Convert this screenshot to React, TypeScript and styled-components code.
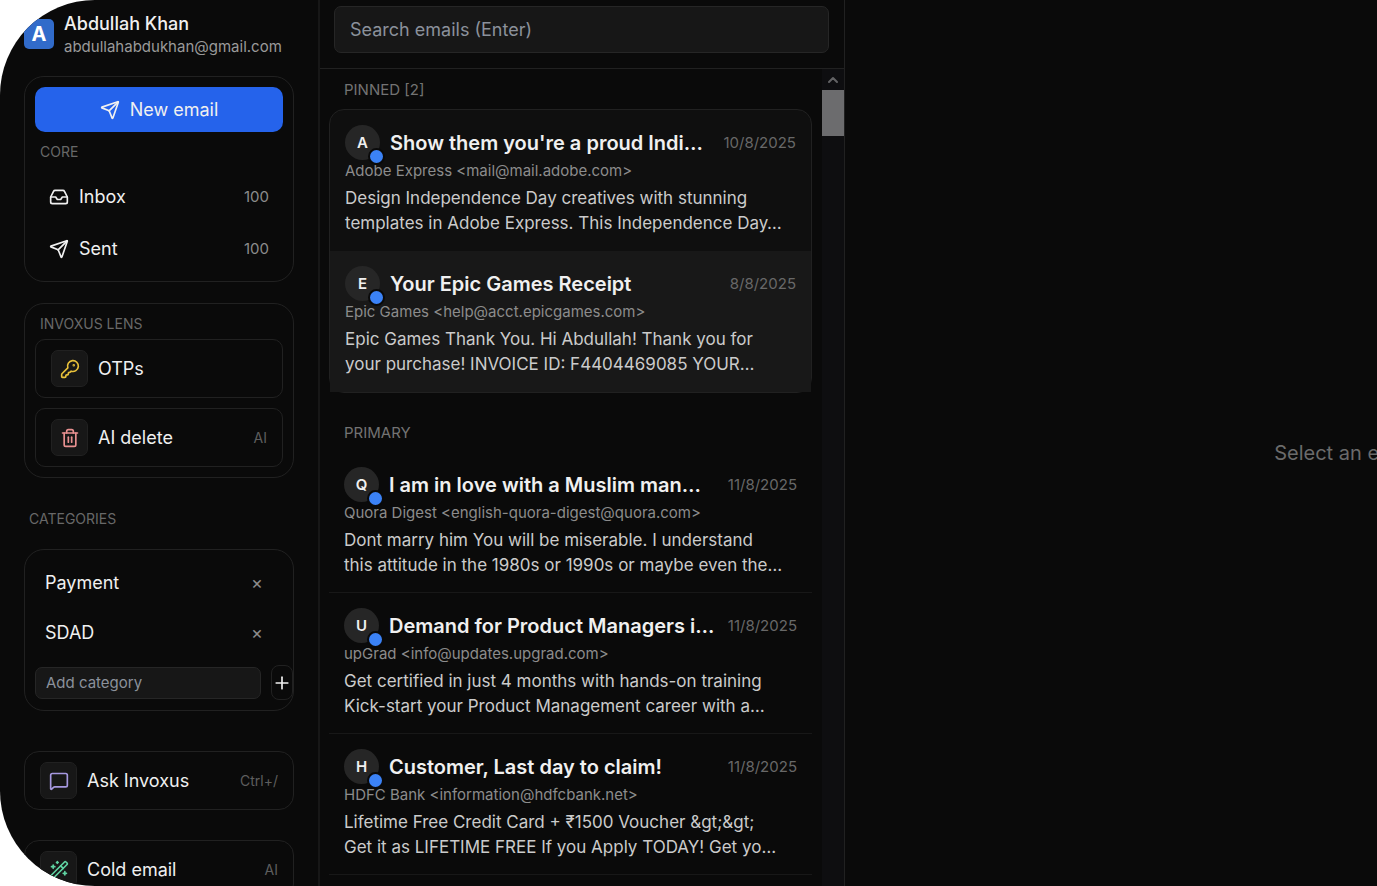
import React from "react";
import styled, { createGlobalStyle, css } from "styled-components";
import {
  ChevronUp,
  Inbox,
  KeyRound,
  MessageSquare,
  Plus,
  Send,
  Trash2,
  WandSparkles,
} from "lucide-react";

const c = {
  bg: "#0a0a0a",
  line: "#212121",
  panel: "#171717",
  raised: "#0f0f0f",
  avatar: "#262626",
  text: "#f0f0f0",
  body: "#cbcbcb",
  muted: "#8c8c8c",
  faint: "#686868",
};

const GlobalStyle = createGlobalStyle`
  * { box-sizing: border-box; }
  body {
    margin: 0;
    background: #ffffff;
    color: ${c.text};
    font-family: Inter, "Liberation Sans", sans-serif;
    font-size: 18px;
    line-height: 25px;
  }
  button, input { font: inherit; color: inherit; margin: 0; }
  button { cursor: pointer; }
  h1, h2, h3, p, ul { margin: 0; padding: 0; font: inherit; }
  ul { list-style: none; }
`;

const Shell = styled.div`
  display: flex;
  height: 100vh;
  overflow: hidden;
  background: ${c.bg};
  border-radius: 95px 0 0 95px;
`;

const Sidebar = styled.aside`
  flex: 0 0 320px;
  display: flex;
  flex-direction: column;
  padding: 11px 24px 0;
  border-right: 2px solid #171717;
  overflow: hidden;
`;

const Profile = styled.div`
  display: flex;
  align-items: center;
  gap: 10px;
  height: 46px;
  flex: none;
  margin-bottom: 19px;
`;

const Logo = styled.div`
  flex: 0 0 30px;
  height: 30px;
  border-radius: 5px;
  background: #316bca;
  color: #ffffff;
  font-size: 20px;
  font-weight: 700;
  line-height: 30px;
  text-align: center;
`;

const ProfileName = styled.p`
  font-weight: 500;
  line-height: 25px;
`;

const ProfileMail = styled.p`
  color: #9a9a9a;
  font-size: 15px;
  line-height: 21px;
`;

const Card = styled.section<{ $gap: number }>`
  flex: none;
  padding: 10px;
  border: 1px solid ${c.line};
  border-radius: 20px;
  margin-bottom: ${(p) => p.$gap}px;
`;

const Label = styled.h2<{ $gap: number }>`
  flex: none;
  color: ${c.faint};
  font-size: 14px;
  line-height: 20px;
  margin-bottom: ${(p) => p.$gap}px;
  padding: 0 5px;
  text-transform: uppercase;
`;

const PrimaryButton = styled.button`
  display: flex;
  align-items: center;
  justify-content: center;
  gap: 10px;
  width: 100%;
  height: 45px;
  margin-bottom: 10px;
  border: 0;
  border-radius: 10px;
  background: #2563eb;
`;

const Nav = styled.nav`
  display: flex;
  flex-direction: column;
  gap: 7px;
`;

const NavLink = styled.a`
  display: flex;
  align-items: center;
  gap: 10px;
  height: 45px;
  padding: 0 14px;
  color: inherit;
  text-decoration: none;
`;

const Count = styled.span`
  margin-left: auto;
  color: ${c.muted};
  font-size: 15px;
`;

const Tool = styled.button<{ $outer?: boolean; $gap?: number }>`
  flex: none;
  display: flex;
  align-items: center;
  gap: 10px;
  width: 100%;
  height: 59px;
  padding: 0 15px;
  border: 1px solid ${c.line};
  border-radius: ${(p) => (p.$outer ? 15 : 10)}px;
  background: transparent;
  margin-bottom: ${(p) => p.$gap ?? 0}px;
`;

const ToolIcon = styled.span<{ $color: string }>`
  display: grid;
  place-items: center;
  width: 37px;
  height: 37px;
  border: 1px solid ${c.line};
  border-radius: 7px;
  background: ${c.panel};
  color: ${(p) => p.$color};
`;

const Hint = styled.span`
  margin-left: auto;
  color: #5e5e5e;
  font-size: 14px;
`;

const CategoryList = styled.ul`
  display: grid;
  gap: 5px;
`;

const Category = styled.li`
  display: flex;
  align-items: center;
  justify-content: space-between;
  height: 45px;
  padding: 0 15px 0 10px;
`;

const Remove = styled.button`
  padding: 0 5px;
  border: 0;
  background: none;
  color: ${c.muted};
`;

const AddRow = styled.form`
  display: flex;
  align-items: center;
  gap: 10px;
  height: 35px;
  margin: 10px -10px 0 0;
`;

const field = css`
  min-width: 0;
  border: 1px solid #262626;
  background: ${c.panel};
  outline: 0;
  &::placeholder { color: #8b919b; opacity: 1; }
`;

const CategoryInput = styled.input`
  ${field}
  flex: 1;
  height: 32px;
  padding: 0 10px;
  border-radius: 7px;
  font-size: 15px;
`;

const AddButton = styled.button`
  display: grid;
  place-items: center;
  flex: 0 0 22px;
  height: 35px;
  padding: 0;
  border: 1px solid ${c.line};
  border-radius: 8px;
  background: transparent;
`;

const MailColumn = styled.section`
  flex: 0 0 525px;
  display: flex;
  flex-direction: column;
  border-right: 1px solid #212121;
  min-width: 0;
  min-height: 0;
`;

const SearchBar = styled.form`
  flex: none;
  padding: 6px 15px 15px 14px;
  border-bottom: 1px solid ${c.line};
`;

const SearchInput = styled.input`
  ${field}
  display: block;
  width: 100%;
  height: 47px;
  padding: 0 15px;
  border-radius: 7px;
`;

const Scroller = styled.div`
  flex: 1;
  display: flex;
  min-height: 0;
  overflow: hidden;
`;

const MailList = styled.div`
  flex: 1;
  min-width: 0;
  padding: 11px 10px 0 9px;
`;

const ListLabel = styled.h2<{ $spaced?: boolean }>`
  padding: 0 15px;
  color: #737373;
  font-size: 15px;
  line-height: 20px;
  margin: ${(p) => (p.$spaced ? "30px 0 9px" : "0 0 9px")};
`;

const Pinned = styled.ul`
  border: 1px solid ${c.line};
  border-radius: 15px;
  background: ${c.raised};
`;

const Item = styled.li<{ $active?: boolean; $divided?: boolean }>`
  height: 141px;
  padding: 15px 15px 0;
  background: ${(p) => (p.$active ? "#181818" : "transparent")};
  border-bottom: ${(p) => (p.$divided ? "1px solid #181818" : "0")};
`;

const ItemHead = styled.div`
  display: flex;
  align-items: center;
  gap: 10px;
  height: 35px;
`;

const Avatar = styled.span`
  position: relative;
  flex: 0 0 35px;
  height: 35px;
  border-radius: 50%;
  background: ${c.avatar};
  font-size: 15px;
  font-weight: 600;
  line-height: 35px;
  text-align: center;
`;

const Unread = styled.i`
  position: absolute;
  right: -5px;
  bottom: -5px;
  width: 17px;
  height: 17px;
  border: 2px solid ${c.bg};
  border-radius: 50%;
  background: #3b82f6;
`;

const Subject = styled.h3`
  flex: 1;
  min-width: 0;
  padding-top: 2px;
  overflow: hidden;
  white-space: nowrap;
  text-overflow: ellipsis;
  font-size: 20px;
  font-weight: 600;
`;

const When = styled.time`
  color: ${c.faint};
  font-size: 15px;
`;

const Sender = styled.p`
  color: ${c.muted};
  font-size: 15px;
  line-height: 22px;
  margin-bottom: 4px;
`;

const Preview = styled.p`
  color: ${c.body};
  font-size: 17px;
  white-space: pre-line;
`;

const ScrollTrack = styled.div`
  flex: 0 0 22px;
  background: #0e0e10;
`;

const ScrollUp = styled.div`
  display: grid;
  place-items: center;
  height: 21px;
  color: #626264;
`;

const Thumb = styled.div`
  height: 46px;
  background: #6c6c6e;
`;

const Reader = styled.main`
  flex: 1 0 1075px;
  display: grid;
  place-items: center;
  padding-top: 20px;
  color: #6b6b6b;
  font-size: 20px;
`;

type Mail = { subject: string; from: string; date: string; preview: string };

const pinned: Mail[] = [
  {
    subject: "Show them you're a proud Indi…",
    from: "Adobe Express <mail@mail.adobe.com>",
    date: "10/8/2025",
    preview:
      "Design Independence Day creatives with stunning\ntemplates in Adobe Express. This Independence Day…",
  },
  {
    subject: "Your Epic Games Receipt",
    from: "Epic Games <help@acct.epicgames.com>",
    date: "8/8/2025",
    preview:
      "Epic Games Thank You. Hi Abdullah! Thank you for\nyour purchase! INVOICE ID: F4404469085 YOUR…",
  },
];

const primary: Mail[] = [
  {
    subject: "I am in love with a Muslim man…",
    from: "Quora Digest <english-quora-digest@quora.com>",
    date: "11/8/2025",
    preview:
      "Dont marry him You will be miserable. I understand\nthis attitude in the 1980s or 1990s or maybe even the…",
  },
  {
    subject: "Demand for Product Managers i…",
    from: "upGrad <info@updates.upgrad.com>",
    date: "11/8/2025",
    preview:
      "Get certified in just 4 months with hands-on training\nKick-start your Product Management career with a…",
  },
  {
    subject: "Customer, Last day to claim!",
    from: "HDFC Bank <information@hdfcbank.net>",
    date: "11/8/2025",
    preview:
      "Lifetime Free Credit Card + ₹1500 Voucher &gt;&gt;\nGet it as LIFETIME FREE If you Apply TODAY! Get yo…",
  },
];

function MailItem({ mail, active, divided }: { mail: Mail; active?: boolean; divided?: boolean }) {
  return (
    <Item $active={active} $divided={divided}>
      <ItemHead>
        <Avatar>
          {mail.from[0].toUpperCase()}
          <Unread />
        </Avatar>
        <Subject>{mail.subject}</Subject>
        <When>{mail.date}</When>
      </ItemHead>
      <Sender>{mail.from}</Sender>
      <Preview>{mail.preview}</Preview>
    </Item>
  );
}

export default function App() {
  return (
    <>
      <GlobalStyle />
      <Shell>
        <Sidebar>
          <Profile>
            <Logo>A</Logo>
            <div>
              <ProfileName>Abdullah Khan</ProfileName>
              <ProfileMail>abdullahabdukhan@gmail.com</ProfileMail>
            </div>
          </Profile>

          <Card $gap={21}>
            <PrimaryButton type="button">
              <Send size={20} />
              New email
            </PrimaryButton>
            <Label $gap={12}>Core</Label>
            <Nav>
              <NavLink href="#inbox">
                <Inbox size={20} />
                Inbox
                <Count>100</Count>
              </NavLink>
              <NavLink href="#sent">
                <Send size={20} />
                Sent
                <Count>100</Count>
              </NavLink>
            </Nav>
          </Card>

          <Card $gap={31}>
            <Label $gap={5}>Invoxus Lens</Label>
            <Tool type="button" $gap={10}>
              <ToolIcon $color="#e8c13a">
                <KeyRound size={20} />
              </ToolIcon>
              OTPs
            </Tool>
            <Tool type="button">
              <ToolIcon $color="#e89090">
                <Trash2 size={20} />
              </ToolIcon>
              AI delete
              <Hint>AI</Hint>
            </Tool>
          </Card>

          <Label $gap={20}>Categories</Label>
          <Card $gap={40}>
            <CategoryList>
              {["Payment", "SDAD"].map((name) => (
                <Category key={name}>
                  {name}
                  <Remove type="button" aria-label={"Remove " + name}>
                    ×
                  </Remove>
                </Category>
              ))}
            </CategoryList>
            <AddRow>
              <CategoryInput aria-label="Add category" placeholder="Add category" />
              <AddButton type="button" aria-label="Add">
                <Plus size={20} />
              </AddButton>
            </AddRow>
          </Card>

          <Tool type="button" $outer $gap={30}>
            <ToolIcon $color="#a698e0">
              <MessageSquare size={20} />
            </ToolIcon>
            Ask Invoxus
            <Hint>Ctrl+/</Hint>
          </Tool>
          <Tool type="button" $outer>
            <ToolIcon $color="#5fd3a2">
              <WandSparkles size={20} />
            </ToolIcon>
            Cold email
            <Hint>AI</Hint>
          </Tool>
        </Sidebar>

        <MailColumn>
          <SearchBar>
            <SearchInput aria-label="Search emails" placeholder="Search emails (Enter)" />
          </SearchBar>
          <Scroller>
            <MailList>
              <ListLabel>PINNED [2]</ListLabel>
              <Pinned>
                {pinned.map((mail, i) => (
                  <MailItem key={mail.subject} mail={mail} active={i === 1} />
                ))}
              </Pinned>
              <ListLabel $spaced>PRIMARY</ListLabel>
              <ul>
                {primary.map((mail) => (
                  <MailItem key={mail.subject} mail={mail} divided />
                ))}
              </ul>
            </MailList>
            <ScrollTrack>
              <ScrollUp>
                <ChevronUp size={16} strokeWidth={3} />
              </ScrollUp>
              <Thumb />
            </ScrollTrack>
          </Scroller>
        </MailColumn>

        <Reader>Select an email to view</Reader>
      </Shell>
    </>
  );
}
